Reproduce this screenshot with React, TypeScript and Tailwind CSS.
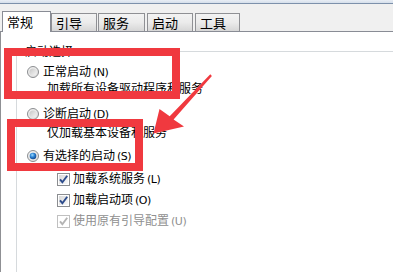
import React from "react";

function Radio({ checked }: { checked?: boolean }) {
  return (
    <svg width="12" height="12" viewBox="0 0 12 12" className="shrink-0">
      <defs>
        <linearGradient id="rOuter" x1="0" y1="0" x2="1" y2="1">
          <stop offset="0" stopColor="#f4f4f4" />
          <stop offset="1" stopColor="#dcdcdc" />
        </linearGradient>
        <linearGradient id="rInner" x1="0" y1="0" x2="1" y2="1">
          <stop offset="0" stopColor="#c6c6c6" />
          <stop offset="1" stopColor="#f6f6f6" />
        </linearGradient>
        <radialGradient id="rDot" cx="0.4" cy="0.35" r="0.7">
          <stop offset="0" stopColor="#9fdcff" />
          <stop offset="0.45" stopColor="#2f86d6" />
          <stop offset="1" stopColor="#0d3f86" />
        </radialGradient>
      </defs>
      <circle cx="6" cy="6" r="5.5" fill="url(#rOuter)" stroke="#8b8d90" strokeWidth="1" />
      {checked ? (
        <circle cx="6" cy="6" r="3.3" fill="url(#rDot)" />
      ) : (
        <circle cx="6" cy="6" r="3.6" fill="url(#rInner)" />
      )}
    </svg>
  );
}

function Check({ disabled }: { disabled?: boolean }) {
  const border = disabled ? "#c0c0c0" : "#8b8d90";
  const mark = disabled ? "#b4b4b4" : "#2d4c8c";
  return (
    <svg width="13" height="13" viewBox="0 0 13 13" className="shrink-0">
      <defs>
        <linearGradient id="cInner" x1="0" y1="0" x2="1" y2="1">
          <stop offset="0" stopColor="#d8d8d8" />
          <stop offset="1" stopColor="#fafafa" />
        </linearGradient>
      </defs>
      <rect x="0.5" y="0.5" width="12" height="12" fill="#ffffff" stroke={border} />
      {!disabled && <rect x="2" y="2" width="9" height="9" fill="url(#cInner)" />}
      <path d="M3 6.3 L5.4 9.2 L10.2 2.8" fill="none" stroke={mark} strokeWidth="1.9" strokeLinejoin="miter" />
    </svg>
  );
}

function Tab({ label, selected, cls }: { label: string; selected?: boolean; cls: string }) {
  if (selected) {
    return (
      <div className={`h-[21px] -mb-px bg-white border border-b-0 border-[#898c95] flex items-start pt-[2px] pl-[4px] text-[13px] leading-[16px] text-black ${cls}`}>
        {label}
      </div>
    );
  }
  return (
    <div className={`h-[18px] bg-gradient-to-b from-[#f3f3f3] via-[#ebebeb] to-[#d6d6d6] border border-b-0 border-[#8f9094] flex items-center pl-[4px] text-[13px] leading-[16px] text-black ${cls}`}>
      {label}
    </div>
  );
}

function Key({ k }: { k: string }) {
  return <span className="text-[11px] ml-[2px] font-['DejaVu_Sans',sans-serif] tracking-[-0.5px]">({k})</span>;
}

export default function App() {
  return (
    <div className="relative w-[413px] h-[272px] bg-white overflow-hidden font-['Noto_Sans_CJK_SC',sans-serif] text-black">
      <div className="w-[393px] h-full flex flex-col">
        <div className="h-[3px] shrink-0 bg-gradient-to-b from-[#e9eef5] to-[#d5dfeb]" />
        <div className="h-px shrink-0 bg-[#7d91ab]" />
        <div className="h-[28px] shrink-0 bg-[#f0f0f0] border-b border-[#898c95] flex items-end pl-[2px]">
          <Tab label="常规" selected cls="w-[49px]" />
          <Tab label="引导" cls="w-[46px]" />
          <Tab label="服务" cls="w-[47px] ml-[1px]" />
          <Tab label="启动" cls="w-[46px] ml-[2px]" />
          <Tab label="工具" cls="w-[45px] ml-[2px]" />
        </div>
        <div className="flex-1 border-l border-[#8f9094] pl-[15px] pt-[12px]">
          <fieldset className="border-0 border-t border-l border-[#d6dadd] h-[260px]">
            <legend className="ml-[5px] px-[3px] text-[12px] leading-[14px]">启动选择</legend>
            <div className="pl-[10px] text-[12px] leading-[16px]">
              <div className="mt-[6px] h-[16px] flex items-center gap-[4px]">
                <Radio />
                <span>正常启动<Key k="N" /></span>
              </div>
              <div className="h-[16px] pl-[20px] flex items-center">加载所有设备驱动程序和服务</div>
              <div className="mt-[10px] h-[16px] flex items-center gap-[4px]">
                <Radio />
                <span>诊断启动<Key k="D" /></span>
              </div>
              <div className="mt-[2px] h-[16px] pl-[20px] flex items-center">仅加载基本设备和服务</div>
              <div className="mt-[8px] h-[16px] flex items-center gap-[4px]">
                <Radio checked />
                <span>有选择的启动<Key k="S" /></span>
              </div>
              <div className="mt-[7px] h-[16px] pl-[30px] flex items-center gap-[3px]">
                <Check />
                <span>加载系统服务<Key k="L" /></span>
              </div>
              <div className="mt-[5px] h-[16px] pl-[30px] flex items-center gap-[3px]">
                <Check />
                <span>加载启动项<Key k="O" /></span>
              </div>
              <div className="mt-[5px] h-[16px] pl-[30px] flex items-center gap-[3px] text-[#8f8f8f]">
                <Check disabled />
                <span>使用原有引导配置<Key k="U" /></span>
              </div>
            </div>
          </fieldset>
        </div>
      </div>

      {/* annotations */}
      <div className="absolute left-[4px] top-[48px] w-[176px] h-[51px] border-[8px] border-[#f0393f] pointer-events-none" />
      <div className="absolute left-[7px] top-[119px] w-[136px] h-[52px] border-[8px] border-[#f0393f] pointer-events-none" />
      <svg className="absolute left-0 top-0 pointer-events-none" width="413" height="272" viewBox="0 0 413 272">
        <polygon
          points="210.3,74.3 211.9,75.9 173.6,119.6 184,126.5 153.5,133.5 159.5,109 169.7,116.2"
          fill="#f0393f"
        />
      </svg>
    </div>
  );
}
